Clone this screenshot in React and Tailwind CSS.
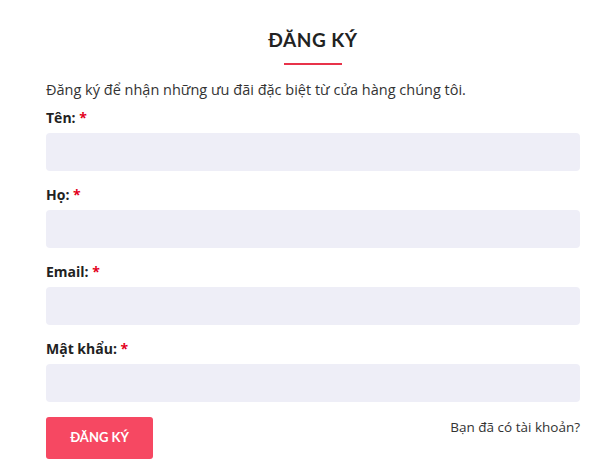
import React from 'react';

const fields = [
  { id: 'first', label: 'Tên:', type: 'text' },
  { id: 'last', label: 'Họ:', type: 'text' },
  { id: 'email', label: 'Email:', type: 'email' },
  { id: 'password', label: 'Mật khẩu:', type: 'password' },
];

const App = () => {
  return (
    <div className="min-h-screen bg-white font-['Open_Sans',sans-serif] text-[#333]">
      <div className="w-[534px] ml-[46px] pt-[27px]">
        <div className="flex flex-col items-center">
          <h2 className="font-['Lato',sans-serif] font-bold text-[19px] leading-[26px] text-[#222] tracking-[0.5px]">ĐĂNG KÝ</h2>
          <div className="w-[58px] h-[2px] bg-[#e8334a] mt-[10px]"></div>
        </div>
        <p className="text-[14.5px] leading-[20px] mt-[15px] text-[#333]">
          Đăng ký để nhận những ưu đãi đặc biệt từ cửa hàng chúng tôi.
        </p>
        <form className="flex flex-col gap-[14px] mt-[8px]" onSubmit={e => e.preventDefault()}>
          {fields.map(f => (
            <div key={f.id} className="flex flex-col">
              <label htmlFor={f.id} className="text-[14px] leading-[20px] font-bold text-[#222] mb-[5px]">
                {f.label} <span className="text-[#e3001b]">*</span>
              </label>
              <input
                id={f.id}
                type={f.type}
                className="h-[38px] w-full rounded-[4px] bg-[#eeeef7] outline-none px-3"
              />
            </div>
          ))}
          <div className="flex justify-between items-start mt-[1px]">
            <button
              type="submit"
              className="w-[107px] h-[42px] rounded-[3px] bg-[#f64862] text-white font-['Lato',sans-serif] font-bold text-[13px]"
            >
              ĐĂNG KÝ
            </button>
            <a href="#" className="text-[13.5px] leading-[20px] text-[#333]">Bạn đã có tài khoản?</a>
          </div>
        </form>
      </div>
    </div>
  );
};

export default App;
